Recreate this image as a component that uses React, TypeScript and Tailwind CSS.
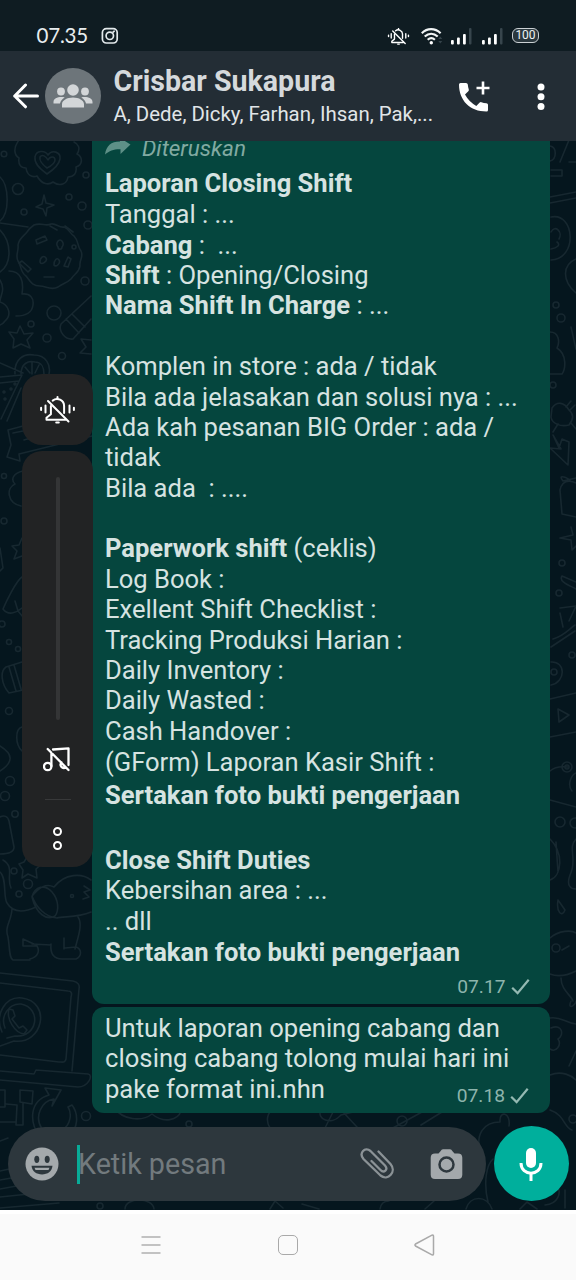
import React from "react";

type Line = { b?: string; t?: string; h?: string };

const report: Line[] = [
  { b: "Laporan Closing Shift", h: "h-[32px]" },
  { t: "Tanggal : ..." },
  { b: "Cabang", t: " :  ..." },
  { b: "Shift", t: " : Opening/Closing" },
  { b: "Nama Shift In Charge", t: " : ..." },
  {},
  { t: "Komplen in store : ada / tidak" },
  { t: "Bila ada jelasakan dan solusi nya : ..." },
  { t: "Ada kah pesanan BIG Order : ada /" },
  { t: "tidak" },
  { t: "Bila ada  : ...." },
  {},
  { b: "Paperwork shift", t: " (ceklis)" },
  { t: "Log Book :" },
  { t: "Exellent Shift Checklist :" },
  { t: "Tracking Produksi Harian :" },
  { t: "Daily Inventory :" },
  { t: "Daily Wasted :" },
  { t: "Cash Handover :" },
  { t: "(GForm) Laporan Kasir Shift :", h: "h-[32px]" },
  { b: "Sertakan foto bukti pengerjaan", h: "h-[34px]" },
  { h: "h-[32px]" },
  { b: "Close Shift Duties", h: "h-[31px]" },
  { t: "Kebersihan area : ..." },
  { t: ".. dll", h: "h-[31px]" },
  { b: "Sertakan foto bukti pengerjaan" },
];

function MutedBell({ className, sw = 2 }: { className: string; sw?: number }) {
  return (
    <svg className={className} viewBox="0 0 36 28" fill="none" stroke="#fff" strokeWidth={sw} strokeLinecap="round" strokeLinejoin="round">
      <path d="M13.2 4.6A7 7 0 0 1 24.600 10V17M11.400 10v8.300L7 21.800v2h19" />
      <path d="M18 1v1.500M8.500 5l20.500 20.500M16.700 26.500h2.600" />
      <path d="M6 9.500v7M1.600 11.800v2.200M30 9.500v7M34.400 11.800v2.200" />
    </svg>
  );
}

function Tick() {
  return (
    <svg className="h-[18px] w-[19px]" viewBox="0 0 19 18" fill="none" stroke="#94b9b2" strokeWidth="2.200">
      <path d="M1.200 9.700l5.400 5.400L17.700 1.700" />
    </svg>
  );
}

function Stamp({ time }: { time: string }) {
  return (
    <div className="flex items-center gap-[5px] text-[19.200px] leading-[20px] text-[#8db4ac]">
      <span>{time}</span>
      <Tick />
    </div>
  );
}

function Doodles() {
  return (
    <svg className="absolute inset-0 h-full w-full" viewBox="0 141 576 1069" fill="none" stroke="#172830" strokeWidth="1.6" strokeLinecap="round" strokeLinejoin="round">
      <path d="M19 140c-6 8-5 15 0 18-1 7 2 10 7 10 1 7 6 10 11 8 5 9 12 9 16 6 7 5 14 2 15-5 6 0 9-4 8-10 7-2 7-10 1-13 4-6 1-10-3-12" />
      <path d="M47 174c-8-6-13-11-12-17 1-7 10-7 13-2 4-6 13-3 12 4-1 6-7 11-13 15zM47 168c-4-3-8-7-7-11 2-3 6-1 8 3 2-4 7-4 7 0 0 3-4 6-8 8z" />
      <circle cx="4" cy="154" r="2.8" /><circle cx="18" cy="189" r="5.5" /><circle cx="69" cy="197" r="3" /><circle cx="24" cy="212" r="3" /><circle cx="82" cy="206" r="4" /><circle cx="86" cy="175" r="3" /><circle cx="88" cy="225" r="4" />
      <path d="M44 195l2 8 8 2-7 3-1 8-3-7-7-2 6-3zM0 177c9 8 10 36 0 44M0 223l28 4M0 230c12 12 12 34 0 42" />
      <path d="M34 225c8-3 11 2 17-1 5-1 8 4 13 3 5 1 6 7 10 9 5 5 3 10 7 15 3 6-2 9-1 15-1 7-6 8-9 13-4 4-8 4-13 8-7 4-12-1-18-1-8 0-10-5-14-10-6-4-4-9-8-15-3-6 1-10 0-16 1-7 6-9 9-13 2-3 4-5 7-7z" />
      <path d="M36 240l9-4 2 4-10 4zM58 247a3 4 0 1 1 4 0c0 3-4 3-4 0zM40 262c0-5 4-7 6-4s-5 8-6 4zM54 265c0-5 3-8 5-5s-3 8-5 5zM68 257l3 2-3 8-4-1zM22 261l9 8-3 3-9-9zM44 277h10M50 226l7 4M65 226l8 6" /><circle cx="74" cy="247" r="2" />
      <path d="M9 271c12 0 15 10 13 23 8-1 12 4 11 11-1 8-8 11-17 11M0 302c9 3 12 13 5 19-2 3-5 4-5 4M0 280c6 10 0 16 0 21" />
      <circle cx="54" cy="313" r="7" /><circle cx="85" cy="281" r="4" /><circle cx="31" cy="324" r="3" /><circle cx="47" cy="338" r="4" /><circle cx="62" cy="356" r="3.5" />
      <path d="M91 296L61 324c-3 7 4 16 12 15l18-20M66 319l13 14M72 314l13 13M20 326l4 8 9-1-6 7 3 8-9-4-8 4 1-9-5-7 8 1zM91 340l-10-1 5 8-6 6 11 1" />
      <path d="M15 374c-1-15 9-21 19-19 12 0 17 10 15 19M21 374c0-10 7-14 14-12 6 0 9 5 9 12M32 362v12M25 367l5 6M39 365l-4 8M0 363l23 10" />
      <path d="M0 377l22-2-21 44M21 388L7 421M0 383l19-2" /><circle cx="4" cy="392" r="1" /><circle cx="11" cy="389" r="1" /><circle cx="5" cy="399" r="1" /><circle cx="15" cy="384" r="1" />
      <path d="M23 426l-15 4 3 15-4 12 13 4-1-7 73-18M13 433l20-4M24 440l10-3" /><circle cx="4" cy="476" r="2.5" /><circle cx="4" cy="521" r="3" />
      <path d="M23 471c-9 2-13 8-8 13-9 4-8 19 6 22M22 538l-3 7-7 1 5 5-3 8 8-3M0 548l3 20-3 3M22 577c-6 4-16 25-19 32 5 7 13 4 19-1M15 601l3 10 5 6" /><circle cx="2" cy="624" r="3" />
      <circle cx="9" cy="642" r="2.5" /><circle cx="18" cy="649" r="2.5" /><circle cx="9" cy="711" r="3.5" /><circle cx="10" cy="781" r="4.5" /><circle cx="5" cy="796" r="4.5" /><circle cx="15" cy="814" r="3.2" />
      <path d="M22 662l-16 5c-6 4-5 17 3 26l14-3M9 667l7 24M14 665l7 24M22 727c-7 2-7 17 0 24M0 746c13 8 14 16 0 25M0 817c4-2 8-1 9 4l5 26c0 5-4 7-14 7" />
      <path d="M24 862l5-8 5 8 9 1-7 6 1 9-9-4-6 4 1-8-4-6zM0 872c7 6 3 25 7 31 6 10 16 10 29 4M12 908c0 13-8 18-4 29 2 12 1 21 5 23h17M3 860c12 7 3 18 8 28" />
      <circle cx="28" cy="884" r="4.5" /><circle cx="19" cy="894" r="3" /><circle cx="14" cy="871" r="3" />
      <path d="M91 912c-14 6-28 4-34 6-12-1-21-11-25-22 8-9 14-13 22-9 11-14 28-14 37-7M32 897c3-11 13-13 20-5 7 8 7 19 3 24-8 5-19-2-23-19M78 917c5 7 0 20-3 32M32 944l19 1M51 944c-1 10 3 15 11 15h14c6-3 6-10 0-12l-11 1M30 959c8-2 10-8 7-13H23v-7l13 6M64 938v11" />
      <circle cx="72" cy="896" r="1.5" /><path d="M84 886l6 4-6 2 5 5-6 2" />
      <path d="M0 973l73 8c5 1 7 4 6 8l-7 82M0 983l68 8c4 0 4 3 3 6l-5 62c-1 4-3 3-7 3L0 1055M0 1071l34 3 2-4 52 4c6 1 0 13-10 13L0 1080" />
      <path d="M2 1032c-8-18 4-36 20-34 30 4 21 47-8 43l-14 5M5 1028c-5-12 4-25 16-24 21 4 17 34-6 32l-8 2M9 1009l4 1 2 6-3 3 7 9 4-2 4 4-3 4c-9-1-18-15-15-25z" />
      <path d="M0 1090h5v17H0M20 1090l13 1-1 13-12-2zM6 1104l11 1-1 20h7v-22M0 1122h16M42 1129c-8-12-1-28 12-30l-2 7 9-16-16-2 4 7c-20 6-20 27-9 42M62 1130c9-5 10-17 6-23l4-2c7 9 6 25-3 29" /><circle cx="86" cy="1116" r="4.5" />
      <path d="M115 1108c7 12 27 14 37 6 12 10 26 6 29-3M189 1127a3 3 0 1 0 0-6 3 3 0 1 0 0 6M270 1128c-5-8-2-16 3-18M321 1110c-5 9 10 16 20 5l16-4M333 1112l-8 16M343 1112l14 15M391 1129l31-17M421 1125l21-13M480 1150c-4-15 3-28 20-28-1-12 11-10 9 4M488 1202c-5-21-1-38 5-43" /><circle cx="402" cy="1121" r="5" />
      <path d="M0 1141l8-3M0 1171l14-3M0 1180l17-3M0 1189l22-4M0 1197l58-6M0 1208l59-5M125 1209c0-12 28-12 29 0M270 1209l5-8 8 7M302 1204l17 5M380 1209c1-7 5-8 9-8M425 1209l9-8M466 1209c4-14 21-14 26 0M520 1209l7-7 10 7M545 1205c13-1 17-12 12-20M565 1190v18" /><circle cx="100" cy="1206" r="3" />
      <path d="M550 146c7 1 7 13 0 15M560 162l9-22M569 162h7M551 170h11v6h-11M550 197l26-5M550 203l26-5M551 217c24-5 27 42 0 43M551 232c4-8 12 0 8 7M551 249c6-1 10-4 6-7M576 259c-14 6-14 22 0 34M571 327l5 22M550 332c9 0 10 10 7 16 11 7 8 22 5 26h-12" />
      <circle cx="556" cy="305" r="3" /><circle cx="561" cy="318" r="4" /><circle cx="553" cy="385" r="3" /><path d="M552 408c5-7 12-6 17 2 6 5 4 10 0 15-8 2-17-1-18-8zM566 407l5-6M570 410l5-5M558 424l-5 8M571 423l5 6M553 435l8 14-11-1 18 17 1-23-7-3-3 9z" />
      <path d="M576 478l-13 3c-5-6 1-5 7-1M560 490c3-14 16-7 16-7M560 490l2 24 14 3M571 527l2 8-13 3 11 2 1 10 4-4" /><circle cx="562" cy="563" r="3" /><circle cx="559" cy="593" r="3" /><path d="M576 582l-14-6c-4 6 9 10 14 13M560 608l16-2-7 15M553 639c11-3 15-9 22-14M560 613l3 14M551 647l24-16" />
      <circle cx="572" cy="655" r="3" /><circle cx="554" cy="672" r="3" /><path d="M551 662c15-1 15 20 0 23M550 699l26-6M558 709l11 6-10 7zM550 737l26-5M550 771c7-6 14-4 18-4M550 800l26 7M576 773c-5 2-9 12-4 18" /><circle cx="567" cy="767" r="5" /><circle cx="567" cy="767" r="2" /><circle cx="560" cy="822" r="5" /><circle cx="575" cy="823" r="5" />
      <path d="M550 839c14 14 12 37 0 41M556 842l2 30M576 839c-9 9 2 20-6 36-4 11 1 14 6 14M558 900c-2 12 4 18 7 10zM550 938c9-8 22-8 26-5M550 974c10 4 20 0 26-3M562 950l7-4M561 978c0 12 10 17 12 23M571 1001c-4 10 5 4 5 0M550 1018c11-2 15 5 26 6M551 1028c12-5 13 8 7 11 4 6-2 14-8 10M576 1051l-7 15M550 1075c12-5 22 1 26 5M550 1110c15 5 14 18 22 20" />
      <circle cx="556" cy="948" r="4" /><circle cx="573" cy="1119" r="4" />
    </svg>
  );
}

function StatusBar() {
  return (
    <div className="flex h-[51px] shrink-0 items-end bg-[#0f1c22] pb-[4px] pl-[36.500px] pr-[37px] text-[#e8edef]">
      <span className="h-[24px] w-[64.500px] whitespace-nowrap font-[Lato] text-[20.500px] leading-[24px] -tracking-[0.200px]">07.35</span>
      <svg className="mb-[2px] h-[18px] w-[18px]" viewBox="0 0 18 18" fill="none" stroke="#e3e9ec" strokeWidth="1.7">
        <rect x="1.4" y="1.6" width="14.8" height="14.4" rx="4" /><circle cx="8.8" cy="8.8" r="3.7" /><path d="M12.2 5l1-.8" strokeLinecap="round" />
      </svg>
      <div className="ml-auto flex items-end">
        <MutedBell className="mb-[2px] mr-[10px] h-[17px] w-[25px]" sw={2.3} />
        <svg className="mb-[2px] mr-[8px] h-[18px] w-[22px]" viewBox="0 0 22 18" fill="none" stroke="#f1f4f5" strokeWidth="2.2">
          <path d="M.8 6.2C6.2.8 14 .8 19.6 6.2M3.7 9.500c4-3.700 9-3.700 13 0M6.700 12.700c2.200-2 5-2 7.200 0" /><circle cx="10.300" cy="15.800" r="1.700" fill="#fff" stroke="none" /><path d="M17.300 12l2-2.400 2 2.400zM17.300 14l2 2.400 2-2.400z" fill="#35434a" stroke="none" />
        </svg>
        {[0, 1].map((i) => (
          <svg key={i} className="mb-[2px] mr-[9px] h-[18px] w-[21.500px]" viewBox="0 0 21.5 18" fill="#fff">
            <rect x="0" y="13" width="2.8" height="4.5" rx="1" /><rect x="6" y="10.5" width="2.8" height="7" rx="1" /><rect x="12" y="7" width="2.8" height="10.5" rx="1" /><rect x="18" y="1" width="2.5" height="16.5" rx="1" fill="#37454c" />
          </svg>
        ))}
        <div className="mb-[4px] flex h-[15.500px] w-[27px] items-center justify-center rounded-[6px] border-[1.500px] border-[#cbd1d4] bg-[#2b383e] text-[12px] leading-none text-[#eef2f3]">100</div>
      </div>
    </div>
  );
}

export default function App() {
  return (
    <div className="flex h-[1280px] w-[576px] flex-col overflow-hidden bg-[#05161e] font-[Roboto,sans-serif]">
      <StatusBar />
      <header className="flex h-[90px] shrink-0 items-center bg-[#232d35] pl-[12px]">
        <svg className="h-[26px] w-[28px]" viewBox="0 0 28 26" fill="none" stroke="#fff" strokeWidth="3" strokeLinecap="round" strokeLinejoin="round">
          <path d="M13.5 2L2.700 13l10.800 10.800M2.700 13H25.500" />
        </svg>
        <div className="ml-[5px] flex h-[56px] w-[56px] items-center justify-center rounded-full bg-[#6d757a]">
          <svg className="h-[24px] w-[40px]" viewBox="0 0 40 24" fill="#d3d6d8">
            <circle cx="20" cy="6" r="5.8" /><circle cx="8" cy="7.5" r="3.9" /><circle cx="32" cy="7.5" r="3.9" />
            <path d="M9 23.500v-3.200c0-4 5-6.800 11-6.800s11 2.800 11 6.800v3.200zM.5 19.500v-1.500c0-3.200 3.500-5 8-5 1.200 0 2.200.1 3.200.5C9 15 7.500 17 7 19.500zM39.500 19.500v-1.500c0-3.200-3.500-5-8-5-1.200 0-2.200.1-3.200.5 2.700 1.500 4.200 3.500 4.700 6z" />
          </svg>
        </div>
        <div className="ml-[12.500px] w-[344.500px] whitespace-nowrap pt-px">
          <div className="text-[28.600px] font-bold leading-[35px] text-[#d5d9dc]">Crisbar Sukapura</div>
          <div className="text-[20.400px] leading-[31px] text-[#e0e5e8]">A, Dede, Dicky, Farhan, Ihsan, Pak,...</div>
        </div>
        <svg className="mt-px h-[32px] w-[32px]" viewBox="0 0 32 32" fill="#fff">
          <path d="M1 3.500Q1 2 2.500 2H8q1.600 0 1.800 1.500.2 2.700 1 5.100.3 1-.5 1.700L7 13.600q4 7.500 11.300 11.300l3.400-3.300q.7-.7 1.700-.4 2.300.8 5 1 1.600.1 1.600 1.600V29q0 1.500-1.500 1.500C12 30.500 1 19.500 1 3.500z" />
          <path d="M25 .5v13M18.500 7h13" fill="none" stroke="#fff" strokeWidth="2.600" />
        </svg>
        <svg className="ml-[46.500px] mt-px h-[28px] w-[8px]" viewBox="0 0 8 28" fill="#fff">
          <circle cx="4" cy="4" r="3.500" /><circle cx="4" cy="13.700" r="3.500" /><circle cx="4" cy="23.400" r="3.500" />
        </svg>
      </header>

      <main className="relative flex h-[1069px] shrink-0 flex-col overflow-hidden bg-[#05161e]">
        <Doodles />
        <div className="relative ml-[91.500px] flex h-[862.500px] w-[458px] shrink-0 flex-col rounded-b-[12px] bg-[#05463e] pl-[13.500px] text-[25.550px] text-[#d6e3e1]">
          <div className="flex h-[26px] shrink-0 items-start gap-[11px] text-[#82aaa2]">
            <svg className="h-[14px] w-[26px]" viewBox="0 0 26 14" fill="#5e9087"><path d="M0 13.500C1 5 6 .5 15 .5V-3l10.500 6.500L15.500 13V8.200C9 8 4.500 9.500 0 13.500z" /></svg>
            <span className="-mt-[8px] text-[22.500px] italic leading-[30px]">Diteruskan</span>
          </div>
          {report.map((l, i) => (
            <div key={i} className={`${l.h ?? "h-[30.400px]"} flex shrink-0 items-center whitespace-pre leading-[30px]`}>
              {l.b && <b className="font-bold">{l.b}</b>}
              {l.t && <span>{l.t}</span>}
            </div>
          ))}
          <div className="mt-[10px] flex justify-end pr-[20px]"><Stamp time="07.17" /></div>
        </div>
        <div className="relative ml-[91.500px] mt-[3.500px] flex h-[106px] w-[458px] shrink-0 flex-col rounded-[12px] bg-[#05463e] pl-[13.500px] pt-[6px] text-[25.600px] leading-[30.400px] text-[#d6e3e1]">
          <div>Untuk laporan opening cabang dan</div>
          <div className="tracking-[0.050px]">closing cabang tolong mulai hari ini</div>
          <div className="flex justify-between pr-[20.500px]"><span>pake format ini.nhn</span><div className="pt-[12px]"><Stamp time="07.18" /></div></div>
        </div>
        <div className="relative mt-[14px] flex items-center gap-[8px] pl-[8px]">
          <div className="flex h-[74px] w-[478px] items-center rounded-full bg-[#2d373d] pl-[17px]">
            <svg className="h-[34px] w-[34px]" viewBox="0 0 34 34">
              <circle cx="17" cy="17" r="16.500" fill="#a4a9ac" /><ellipse cx="11.800" cy="12.300" rx="2.500" ry="3.600" fill="#2d373d" /><ellipse cx="22.200" cy="12.300" rx="2.500" ry="3.600" fill="#2d373d" />
              <path d="M6.500 18.800h21c-.5 5.500-5 8.700-10.500 8.700S7 24.300 6.500 18.800z" fill="#2d373d" /><path d="M9.500 20.700h15l-1 2.300h-13z" fill="#a4a9ac" />
            </svg>
            <div className="ml-[18px] h-[39px] w-[3px] bg-[#08ab98]" />
            <span className="-ml-[2px] w-[282px] text-[28.700px] leading-[36px] text-[#727a7e]">Ketik pesan</span>
            <svg className="h-[32px] w-[34px]" viewBox="0 0 34 32" fill="none" stroke="#8b9296" strokeWidth="2.300" strokeLinecap="round">
              <path d="M18.500 3.500L30.500 16C37 23.500 28 33.500 20.500 27.500L3.500 11C-1.500 5 5 -1.500 10.500 3L25 17.500c3.500 4-1 8-4.500 4.500L11.500 13" />
            </svg>
            <svg className="ml-[36px] h-[31px] w-[33px]" viewBox="0 0 33 31">
              <path d="M10.500 2.300Q11.500.3 13 .3h7q1.500 0 2.500 2L24.500 4.500H28q4.300 0 4.300 4.300v17q0 4.200-4.300 4.200H5Q.7 30 .7 25.800v-17Q.7 4.500 5 4.500h3.500z" fill="#a4a9ac" /><circle cx="16.500" cy="15.500" r="7" fill="#a4a9ac" stroke="#2d373d" strokeWidth="2.500" />
            </svg>
          </div>
          <div className="-ml-[0.500px] -mt-px flex h-[75px] w-[75px] items-center justify-center rounded-full bg-[#00af9c]">
            <svg className="h-[34px] w-[24px]" viewBox="0 0 24 34" fill="none" stroke="#fff" strokeWidth="3">
              <rect x="7" y="1" width="10" height="20" rx="5" fill="#fff" stroke="none" /><path d="M2 16c0 13.500 20 13.500 20 0M12 26v8" />
            </svg>
          </div>
        </div>
        <div className="absolute left-[22px] top-[233px] flex w-[70.500px] flex-col gap-[6px]">
          <div className="flex h-[71px] items-center justify-center rounded-[20px] bg-[#222324]"><MutedBell className="h-[28px] w-[37px]" sw={2} /></div>
          <div className="flex h-[416px] flex-col items-center rounded-[20px] bg-[#222324] pl-px pt-[26px]">
            <div className="h-[243px] w-[4px] rounded-full bg-[#343536]" />
            <svg className="mt-[25px] h-[30px] w-[30px]" viewBox="0 0 30 30" fill="none" stroke="#fff" strokeWidth="2.300" strokeLinejoin="round" strokeLinecap="round">
              <circle cx="4.700" cy="21.500" r="3.700" /><path d="M8.400 21V8M10 4.500L25.500 3.300V20M4.700 4L25.500 25M23 22.500c-4 1.800-7-2-4.500-5" />
            </svg>
            <div className="mt-[24px] h-px w-[26px] bg-[#38393a]" />
            <div className="mt-[27px] flex flex-col gap-[5px]">
              <div className="h-[9px] w-[9px] rounded-full border-2 border-white" /><div className="h-[9px] w-[9px] rounded-full border-2 border-white" />
            </div>
          </div>
        </div>
      </main>

      <nav className="flex h-[70px] shrink-0 items-center border-t-4 border-white bg-[#fafafa] pb-[4px] pl-[141px]">
        <svg className="h-[20px] w-[20px]" viewBox="0 0 20 20" stroke="#b0b0b0" strokeWidth="1.700"><path d="M.5 2h19M.5 10h19M.5 18h19" /></svg>
        <div className="ml-[117px] h-[20px] w-[20px] rounded-[5px] border-[1.500px] border-[#a9a9a9]" />
        <svg className="ml-[116px] h-[22px] w-[21px]" viewBox="0 0 21 22" fill="none" stroke="#a9a9a9" strokeWidth="1.500" strokeLinejoin="round"><path d="M1.500 10q-1 1 0 2L18 20.800q1.500.5 1.500-1V2.200q0-1.500-1.500-1z" /></svg>
      </nav>
    </div>
  );
}
